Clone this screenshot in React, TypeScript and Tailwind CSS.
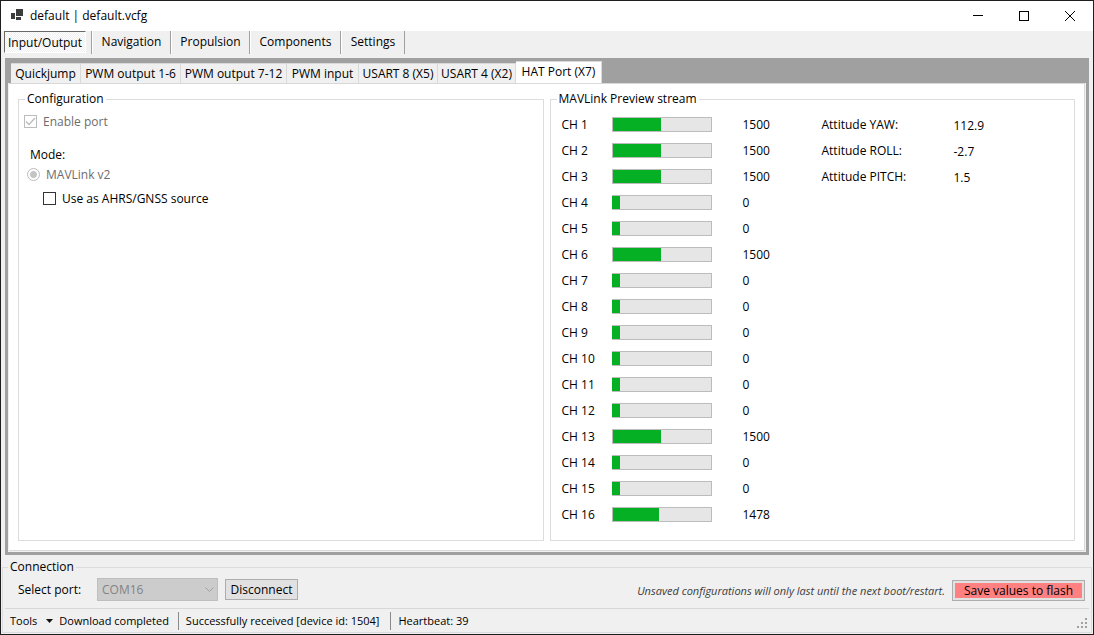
import { useState } from 'react';
import clsx from 'clsx';

const sections = [
  { name: 'Input/Output', width: 'w-[88px]' },
  { name: 'Navigation', width: 'w-[79px]' },
  { name: 'Propulsion', width: 'w-[79px]' },
  { name: 'Components', width: 'w-[91px]' },
  { name: 'Settings', width: 'w-[64px]' },
];

const ports = [
  { label: 'Quickjump', width: 'w-[70px]' },
  { label: 'PWM output 1-6', width: 'w-[100px]' },
  { label: 'PWM output 7-12', width: 'w-[106px]' },
  { label: 'PWM input', width: 'w-[72px]' },
  { label: 'USART 8 (X5)', width: 'w-[79px]' },
  { label: 'USART 4 (X2)', width: 'w-[78px]' },
  { label: 'HAT Port (X7)', width: 'w-[86px]' },
];

const channels = [1500, 1500, 1500, 0, 0, 1500, 0, 0, 0, 0, 0, 0, 1500, 0, 0, 1478];

const attitude = [
  { label: 'Attitude YAW:', value: '112.9' },
  { label: 'Attitude ROLL:', value: '-2.7' },
  { label: 'Attitude PITCH:', value: '1.5' },
];

function TitleBar() {
  return (
    <header className="flex h-[30px] shrink-0 items-center bg-white pl-[9px]">
      <svg width="13" height="13" viewBox="0 0 13 13" fill="#3c3c3c" className="mr-[7px] mb-[2px]" aria-hidden="true">
        <rect x="6" y="0" width="7" height="7" />
        <rect x="1" y="4" width="4" height="6" />
        <rect x="6" y="8" width="5" height="3" />
      </svg>
      <h1 className="flex-1">default | default.vcfg</h1>
      <button aria-label="Minimize" className="flex h-full w-[46px] items-center justify-center">
        <svg width="10" height="10" viewBox="0 0 10 10" stroke="#000" aria-hidden="true">
          <path d="M0 4.5H10" />
        </svg>
      </button>
      <button aria-label="Maximize" className="flex h-full w-[46px] items-center justify-center">
        <svg width="10" height="10" viewBox="0 0 10 10" stroke="#000" fill="none" aria-hidden="true">
          <rect x="0.5" y="0.5" width="9" height="9" />
        </svg>
      </button>
      <button aria-label="Close" className="flex h-full w-[46px] items-center justify-center">
        <svg width="10" height="10" viewBox="0 0 10 10" stroke="#000" aria-hidden="true">
          <path d="M0 0L10 10M10 0L0 10" />
        </svg>
      </button>
    </header>
  );
}

function SectionBar() {
  const [active, setActive] = useState('Input/Output');

  return (
    <nav className="flex h-[27px] shrink-0 pl-[2px]">
      {sections.map(({ name, width }) => (
        <div key={name} className={clsx('flex h-[23px] border-r border-[#a0a0a0]', width)}>
          <button
            onClick={() => setActive(name)}
            className={clsx(
              'flex h-[22px] flex-1 items-center justify-center whitespace-nowrap border-l',
              name === active
                ? 'mr-[5px] border-t border-r border-b border-t-[#696969] border-r-white border-b-white border-l-[#696969] bg-[conic-gradient(#fff_25%,#f0f0f0_0_50%,#fff_0_75%,#f0f0f0_0)] bg-size-[2px_2px] pt-[2px]'
                : 'border-white'
            )}
          >
            {name}
          </button>
        </div>
      ))}
    </nav>
  );
}

function PortTabs() {
  const [active, setActive] = useState('HAT Port (X7)');

  return (
    <div role="tablist" className="flex h-[25px] shrink-0 items-end pl-1">
      {ports.map(({ label, width }) => (
        <button
          key={label}
          role="tab"
          aria-selected={label === active}
          onClick={() => setActive(label)}
          className={clsx(
            'shrink-0 whitespace-nowrap border-t border-r border-[#d9d9d9] text-center',
            width,
            label === active ? 'h-[22px] bg-white pb-px' : 'h-5 bg-[#f0f0f0]'
          )}
        >
          {label}
        </button>
      ))}
    </div>
  );
}

function Configuration() {
  return (
    <fieldset className="min-w-0 border border-[#dcdcdc] px-[5px]">
      <legend className="ml-px px-[2px]">Configuration</legend>
      <label className="mt-[7px] flex items-center gap-[6px] text-[#6d6d6d]">
        <span className="mb-px grid">
          <input
            type="checkbox"
            defaultChecked
            disabled
            className="col-start-1 row-start-1 size-[13px] appearance-none border border-[#bcbcbc] bg-white"
          />
          <svg
            width="13"
            height="13"
            viewBox="0 0 13 13"
            fill="none"
            stroke="#bcbcbc"
            strokeWidth="1.4"
            className="pointer-events-none col-start-1 row-start-1"
            aria-hidden="true"
          >
            <path d="M2 6.5L5 9.5L11 3" />
          </svg>
        </span>
        Enable port
      </label>
      <p className="mt-[17px] pl-[6px]">Mode:</p>
      <label className="mt-1 flex items-center gap-[6px] pl-[3px] text-[#6d6d6d]">
        <input
          type="radio"
          name="mode"
          defaultChecked
          disabled
          className="mb-px size-[13px] appearance-none rounded-full border border-[#bcbcbc] bg-[radial-gradient(circle,#c4c4c4_3px,#fff_4px)]"
        />
        MAVLink v2
      </label>
      <label className="mt-2 flex items-center gap-[6px] pl-[19px]">
        <input
          type="checkbox"
          className="mb-px size-[13px] appearance-none border border-[#333] bg-white checked:bg-[#333]"
        />
        Use as AHRS/GNSS source
      </label>
    </fieldset>
  );
}

function ChannelBar({ label, value }: { label: string; value: number }) {
  // An idle channel still shows a short stub over the left border
  const width = value > 0 ? Math.round(((value - 1010) / 1000) * 98) : 8;

  return (
    <div
      role="progressbar"
      aria-label={label}
      aria-valuenow={value}
      aria-valuemin={0}
      aria-valuemax={2000}
      className="h-[15px] w-[100px] border border-[#bcbcbc] bg-[#e6e6e6]"
    >
      <div className={clsx('h-full bg-[#06b025]', value === 0 && '-ml-px')} style={{ width }} />
    </div>
  );
}

function PreviewStream() {
  return (
    <fieldset className="min-w-0 border border-[#dcdcdc] px-[11px]">
      <legend className="-ml-[5px] px-[2px]">MAVLink Preview stream</legend>
      <div className="mt-1 flex items-start">
        <table className="text-left">
          <tbody>
            {channels.map((value, i) => (
              <tr key={i} className="h-[26px]">
                <th scope="row" className="w-[50px] p-0 pt-[2px] font-normal">
                  CH {i + 1}
                </th>
                <td className="w-[131px] p-0">
                  <ChannelBar label={`CH ${i + 1}`} value={value} />
                </td>
                <td className="w-[79px] p-0 pt-[2px]">{value}</td>
              </tr>
            ))}
          </tbody>
        </table>
        <table className="text-left">
          <tbody>
            {attitude.map(({ label, value }) => (
              <tr key={label} className="h-[26px]">
                <th scope="row" className="w-[132px] p-0 pt-[2px] font-normal">
                  {label}
                </th>
                <td className="p-0 pt-[3px]">{value}</td>
              </tr>
            ))}
          </tbody>
        </table>
      </div>
    </fieldset>
  );
}

function StatusBar() {
  return (
    <footer className="mx-[2px] flex h-6 items-center border-t border-[#d7d7d7] pl-[5px] text-[11px]">
      <button className="flex items-center gap-[9px]">
        Tools
        <svg width="7" height="4" viewBox="0 0 7 4" fill="#111" aria-hidden="true">
          <path d="M0 0H7L3.5 4Z" />
        </svg>
      </button>
      <span className="border-r border-[#8a8a8a] py-px pr-[9px] pl-[6px]">Download completed</span>
      <span className="border-r border-[#8a8a8a] py-px pr-[11px] pl-[7px]">
        Successfully received [device id: 1504]
      </span>
      <span className="pl-[7px]">Heartbeat: 39</span>
      <svg width="10" height="10" viewBox="0 0 10 10" fill="#a0a0a0" className="mr-[2px] mb-1 ml-auto self-end" aria-hidden="true">
        <path d="M8 0h2v2h-2zM4 4h2v2h-2zM8 4h2v2h-2zM0 8h2v2h-2zM4 8h2v2h-2zM8 8h2v2h-2z" />
      </svg>
    </footer>
  );
}

function Connection() {
  return (
    <fieldset className="mb-px shrink-0 border border-[#dcdcdc]">
      <legend className="ml-[5px] px-[2px]">Connection</legend>
      <div className="flex h-[33px] items-start pt-[3px] pr-[6px] pl-[15px]">
        <label htmlFor="port" className="w-[79px] pt-1">
          Select port:
        </label>
        <span className="grid items-center">
          <select
            id="port"
            disabled
            className="col-start-1 row-start-1 h-[23px] w-[121px] appearance-none border border-[#bfbfbf] bg-[#cccccc] pl-1 text-[#838383] opacity-100"
          >
            <option>COM16</option>
          </select>
          <svg
            width="9"
            height="6"
            viewBox="0 0 9 6"
            fill="none"
            stroke="#a0a0a0"
            className="pointer-events-none col-start-1 row-start-1 mr-1 justify-self-end"
            aria-hidden="true"
          >
            <path d="M0.5 0.5L4.5 4.5L8.5 0.5" />
          </svg>
        </span>
        <button className="mt-px ml-[7px] h-[21px] w-[73px] border border-[#adadad] bg-[#e1e1e1]">Disconnect</button>
        <p className="mt-[5px] ml-auto text-[11px] text-[#3c3c3c] italic">
          Unsaved configurations will only last until the next boot/restart.
        </p>
        <button className="mt-[2px] ml-[7px] h-[21px] w-[133px] border border-[#adadad] bg-[#e1e1e1] p-[2px]">
          <span className="flex h-full items-center justify-center bg-[#ff8080]">Save values to flash</span>
        </button>
      </div>
      <StatusBar />
    </fieldset>
  );
}

export default function App() {
  return (
    <div className="flex min-h-screen flex-col border border-[#1f1d20] bg-[#f0f0f0] px-px font-['Open_Sans','Noto_Sans',sans-serif] text-[12px] leading-4 text-black">
      <div className="-mx-px">
        <TitleBar />
      </div>
      <SectionBar />
      <main className="mx-[3px] flex flex-1 flex-col bg-[#a0a0a0] px-[3px] pb-[3px]">
        <div className="-ml-px">
          <PortTabs />
        </div>
        <div className="flex flex-1 bg-[#f0f0f0] pr-px pb-px pl-px">
          <div className="grid flex-1 grid-cols-2 gap-[6px] border-t border-r border-b border-[#d9d9d9] bg-white pt-[7px] pr-[9px] pb-[9px] pl-[9px]">
            <Configuration />
            <PreviewStream />
          </div>
        </div>
      </main>
      <div className="-mx-px mt-1 px-px">
        <Connection />
      </div>
    </div>
  );
}
